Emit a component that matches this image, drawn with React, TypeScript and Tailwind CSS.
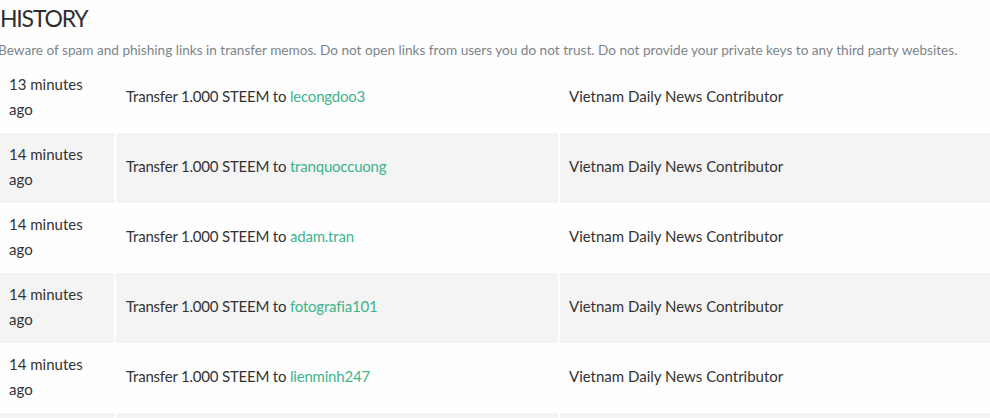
import * as React from 'react';

const rows = [
  { time: '13 minutes ago', to: 'lecongdoo3' },
  { time: '14 minutes ago', to: 'tranquoccuong' },
  { time: '14 minutes ago', to: 'adam.tran' },
  { time: '14 minutes ago', to: 'fotografia101' },
  { time: '14 minutes ago', to: 'lienminh247' },
  { time: '14 minutes ago', to: 'huyenvu' },
];

const App = () => {
  return (
    <div className="bg-[#fefefe] text-[#333] font-['Lato',sans-serif] overflow-hidden h-[418px]">
      <h2 className="text-[23px] leading-[34px] pt-[1px] tracking-[-1.2px] text-[#2f2f2f]">HISTORY</h2>
      <p className="text-[13.6px] leading-[20px] mt-[5px] text-[#7d8489] whitespace-nowrap -ml-[2px]">
        Beware of spam and phishing links in transfer memos. Do not open links from users you do not trust. Do not provide your private keys to any third party websites.
      </p>
      <div className="mt-[3px]">
        {rows.map((r, i) => (
          <div
            key={i}
            className={`grid grid-cols-[114px_444px_1fr] h-[70px] ${i % 2 === 1 ? 'bg-[#f4f4f4]' : 'bg-[#fefefe]'}`}
          >
            <div className="pl-[9px] pr-2 pt-[9px] leading-[25px] text-[15px]">{r.time}</div>
            <div className="border-l-2 border-[#fefefe] pl-[10px] pb-[3px] flex items-center text-[15px] tracking-[-0.2px]">
              <span>
                Transfer 1.000 STEEM to <a className="text-[#3eb48c]">{r.to}</a>
              </span>
            </div>
            <div className="border-l-2 border-[#fefefe] pl-[9px] pb-[3px] flex items-center text-[15px]">
              Vietnam Daily News Contributor
            </div>
          </div>
        ))}
      </div>
    </div>
  );
};

export default App;
